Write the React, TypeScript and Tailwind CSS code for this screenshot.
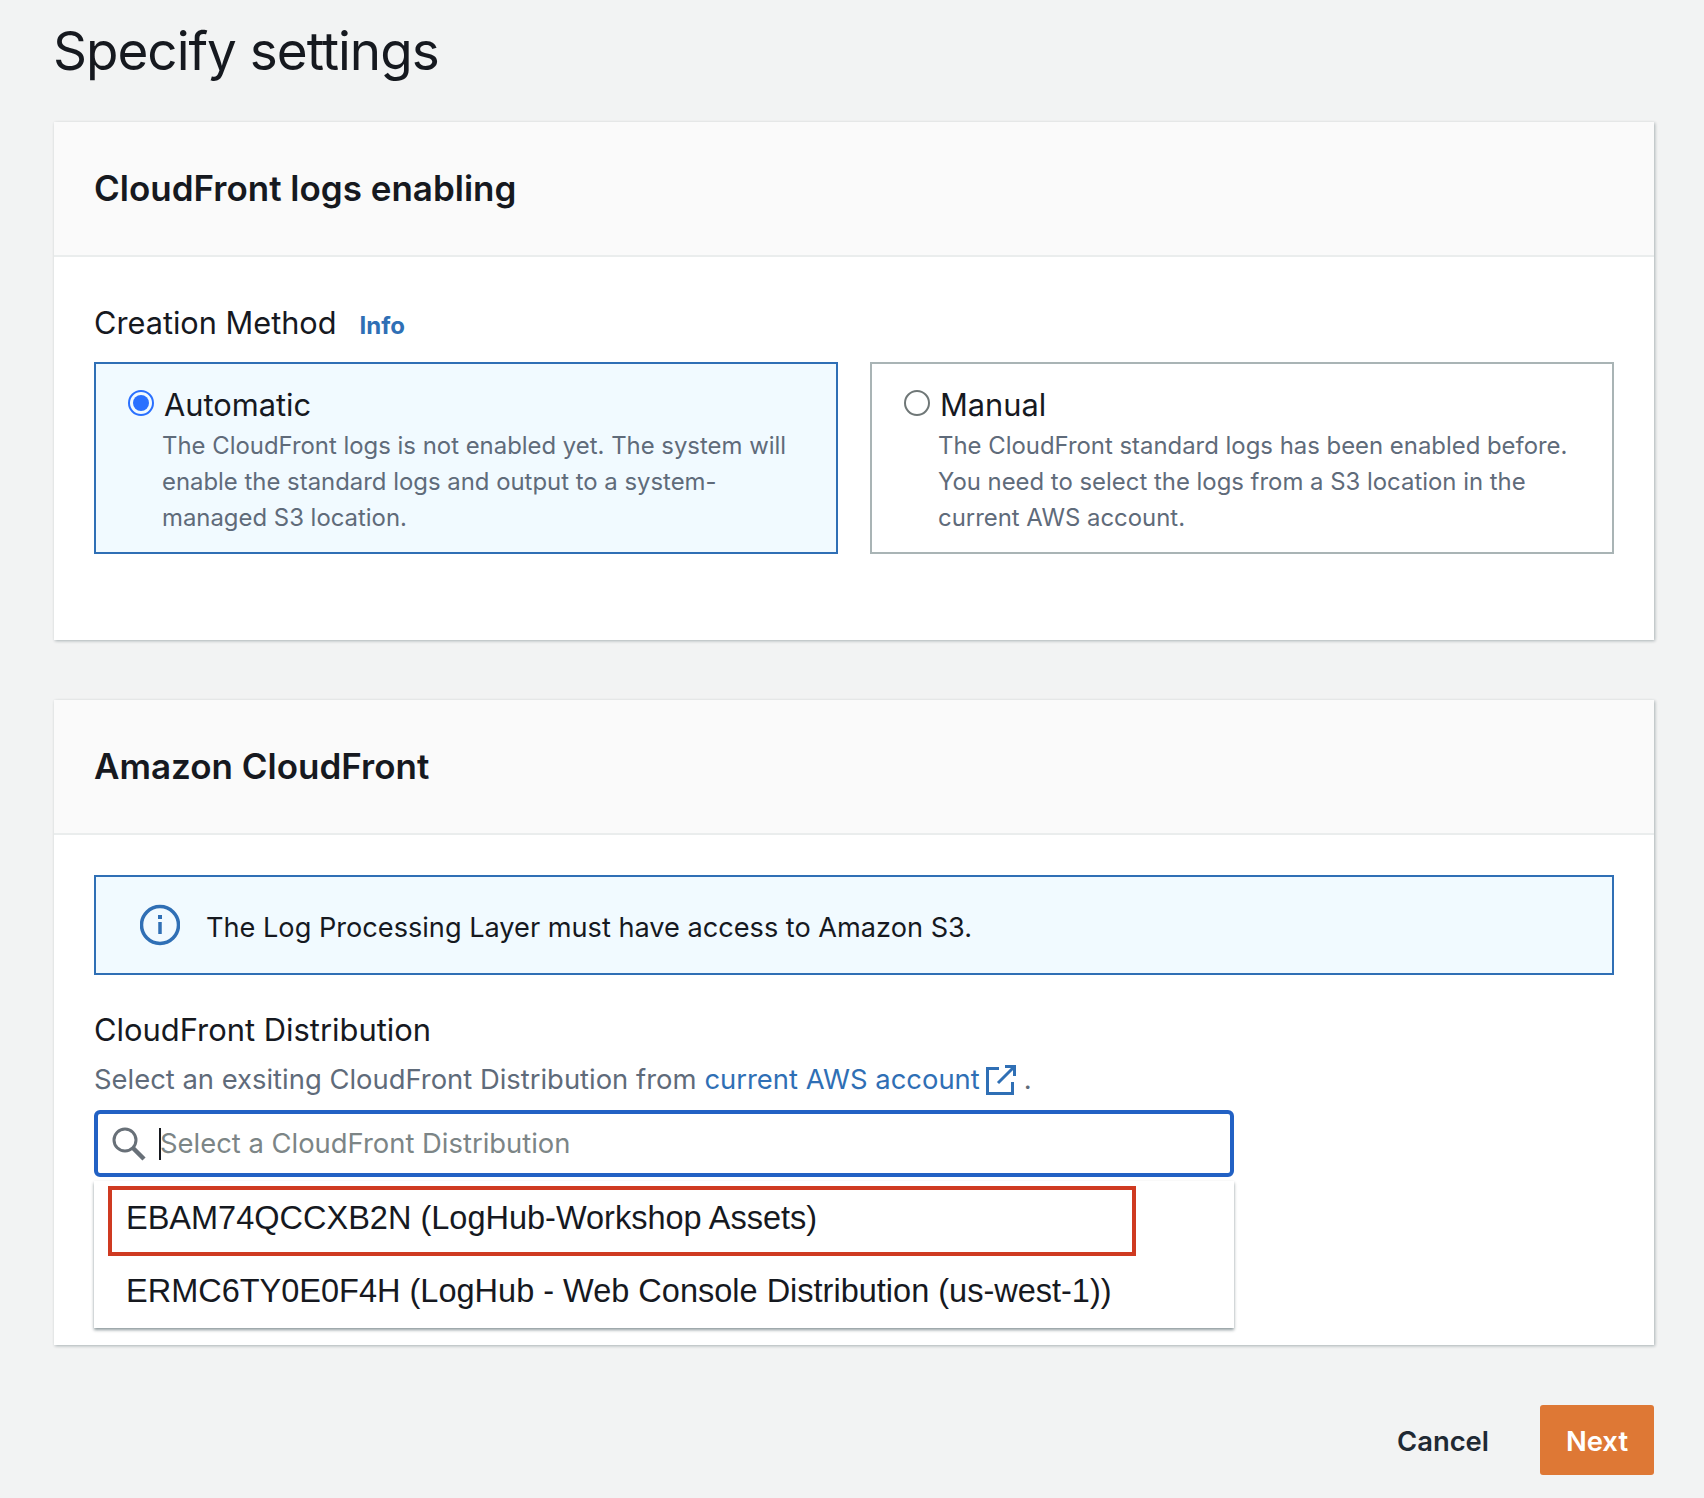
const font = { fontFamily: 'Inter, "Liberation Sans", sans-serif' };

type MethodType = {
  title: string;
  lines: string[];
  selected?: boolean;
};

const MethodCard = ({ title, lines, selected }: MethodType) => {
  return (
    <div
      className={`flex-1 h-[192px] border-2 pl-[32px] pt-[21px] ${
        selected ? 'border-[#2f6fb5] bg-[#f1faff]' : 'border-[#a9b4b5] bg-white'
      }`}
    >
      <div className="flex items-center h-[40px]">
        {selected ? (
          <div className="w-[26px] h-[26px] rounded-full border-2 border-[#2a70ff] flex items-center justify-center -mt-[5px]">
            <div className="w-[16px] h-[16px] rounded-full bg-[#2a70ff]"></div>
          </div>
        ) : (
          <div className="w-[26px] h-[26px] rounded-full border-2 border-[#6f7777] bg-white -mt-[5px]"></div>
        )}
        <span className="ml-[10px] text-[30.800px] text-[#16191f] leading-[40px]">{title}</span>
      </div>
      <div className="ml-[34px] mt-[3px] text-[23.900px] leading-[36px] text-[#5f6b7a]">
        {lines.map((e, idx) => {
          return <div key={idx}>{e}</div>;
        })}
      </div>
    </div>
  );
};

const CardHeader = ({ title }: { title: string }) => {
  return (
    <div className="h-[135px] bg-[#fafafa] border-b-2 border-[#eaeded] pl-[40px] flex items-center">
      <h2 className="text-[35px] font-semibold text-[#16191f]">{title}</h2>
    </div>
  );
};

const App = () => {
  return (
    <div className="w-[1704px] h-[1498px] bg-[#f2f3f3] pl-[54px] pr-[50px] overflow-hidden" style={font}>
      <h1 className="h-[122px] pt-[14px] -ml-[1px] text-[53px] leading-[74px] tracking-[-1px] text-[#16191f]">Specify settings</h1>

      <section className="h-[518px] bg-white shadow-[1px_1px_3px_rgba(0,28,36,0.3)]">
        <CardHeader title="CloudFront logs enabling" />
        <div className="px-[40px] pt-[46px]">
          <div className="flex items-center h-[42px]">
            <span className="-mt-[2px] text-[30.700px] text-[#16191f]">Creation Method</span>
            <span className="ml-[23px] mt-[3px] text-[24px] font-bold text-[#2f6fb5]">Info</span>
          </div>
          <div className="flex gap-[32px] mt-[17px]">
            <MethodCard
              selected
              title="Automatic"
              lines={[
                'The CloudFront logs is not enabled yet. The system will',
                'enable the standard logs and output to a system-',
                'managed S3 location.',
              ]}
            />
            <MethodCard
              title="Manual"
              lines={[
                'The CloudFront standard logs has been enabled before.',
                'You need to select the logs from a S3 location in the',
                'current AWS account.',
              ]}
            />
          </div>
        </div>
      </section>

      <section className="h-[645px] mt-[60px] bg-white shadow-[1px_1px_3px_rgba(0,28,36,0.3)]">
        <CardHeader title="Amazon CloudFront" />
        <div className="px-[40px] pt-[40px]">
          <div className="h-[100px] border-2 border-[#2f6fb5] bg-[#f1faff] flex items-center pl-[44px]">
            <svg width="40" height="42" viewBox="0 0 40 42" fill="none" stroke="#2f6fb5">
              <circle cx="20" cy="21" r="18.500" strokeWidth="3.500" />
              <path d="M20 18v12" strokeWidth="3.500" />
              <path d="M20 11v4" strokeWidth="4" />
            </svg>
            <span className="ml-[26px] mt-[7px] text-[27.150px] text-[#16191f]">The Log Processing Layer must have access to Amazon S3.</span>
          </div>

          <div className="mt-[33px] h-[44px] flex items-center text-[30.900px] text-[#16191f]">CloudFront Distribution</div>
          <div className="mt-[7px] h-[42px] flex items-center text-[27.400px] text-[#5f6b7a]">
            <span>Select an exsiting CloudFront Distribution from</span>
            <span className="ml-[8px] text-[#2f6fb5]">current AWS account</span>
            <svg className="ml-[5px]" width="32" height="32" viewBox="0 0 32 32" fill="none" stroke="#2f6fb5" strokeWidth="3">
              <path d="M14 4.500H2.500v25h25V18" />
              <path d="M13 19L29 3M20 2.500h9.500V12" />
            </svg>
            <span className="ml-[7px]">.</span>
          </div>

          <div className="mt-[9px] w-[1140px]">
            <div className="h-[67px] border-[4px] border-[#2261c4] rounded-[6px] flex items-center pl-[14px] bg-white">
              <svg className="shrink-0" width="34" height="34" viewBox="0 0 34 34" fill="none" stroke="#687078">
                <circle cx="13" cy="13" r="11" strokeWidth="3" />
                <path d="M21 21L32 32" strokeWidth="4.500" />
              </svg>
              <div className="ml-[13px] w-[2px] h-[32px] bg-[#16191f] shrink-0"></div>
              <span className="-ml-[1px] mt-[1px] text-[27.400px] text-[#7c8586]">Select a CloudFront Distribution</span>
            </div>
            <div className="mt-[4px] h-[147px] bg-white shadow-[0_2px_3px_rgba(0,28,36,0.45)] pt-[5px] pl-[14px] text-[#16191f] text-[32.500px]" style={{ fontFamily: '"Liberation Sans", Arial, sans-serif' }}>
              <div className="w-[1028px] h-[70px] border-[4px] border-[#cf3a21] pl-[14px] flex items-center pb-[5px]">EBAM74QCCXB2N (LogHub-Workshop Assets)</div>
              <div className="h-[70px] pl-[18px] flex items-center">ERMC6TY0E0F4H (LogHub - Web Console Distribution (us-west-1))</div>
            </div>
          </div>
        </div>
      </section>

      <div className="flex justify-end items-center mt-[60px]">
        <button className="mr-[51px] pt-[3px] text-[27.400px] font-semibold text-[#1f2933]">Cancel</button>
        <button className="w-[114px] h-[70px] pt-[3px] rounded-[3px] bg-[#de7835] text-[27.400px] font-semibold text-white">Next</button>
      </div>
    </div>
  );
};

export default App;
